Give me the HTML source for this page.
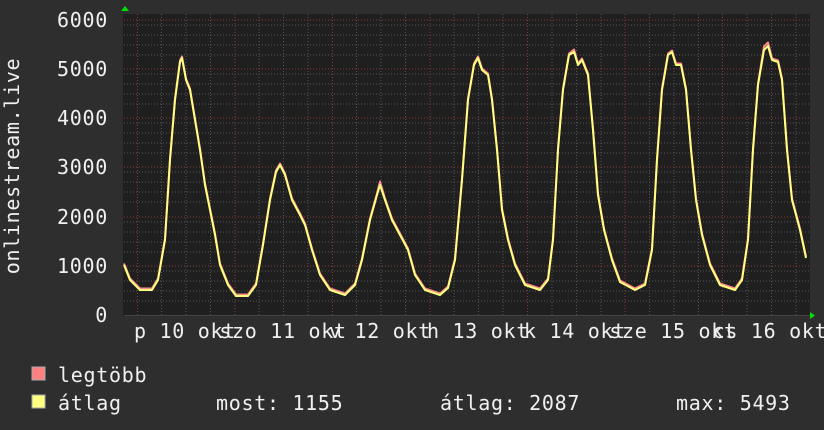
<!DOCTYPE html>
<html><head><meta charset="utf-8"><style>
html,body{margin:0;padding:0;background:#2e2e2e;}
svg{display:block}
text{font-family:"DejaVu Sans Mono","Liberation Mono",monospace;font-size:20px;fill:#f0f0f0;letter-spacing:0.7px}
</style></head><body>
<svg width="824" height="430" viewBox="0 0 824 430" xmlns="http://www.w3.org/2000/svg">
<rect width="824" height="430" fill="#2e2e2e"/>
<rect x="123" y="14" width="687" height="302" fill="#1f1f1f"/>
<g stroke="#555" stroke-width="1" stroke-dasharray="1,2">
<path d="M124 25H810M124 35H810M124 45H810M124 55H810M124 74H810M124 84H810M124 94H810M124 104H810M124 123H810M124 133H810M124 143H810M124 153H810M124 172H810M124 182H810M124 192H810M124 202H810M124 222H810M124 232H810M124 242H810M124 252H810M124 271H810M124 281H810M124 291H810M124 301H810"/>
<path d="M161.5 14V316M186 14V316M210.5 14V316M259 14V316M283.5 14V316M308 14V316M356.5 14V316M381 14V316M405.5 14V316M454 14V316M478.5 14V316M503 14V316M552 14V316M576.5 14V316M601 14V316M649.5 14V316M674 14V316M698.5 14V316M747 14V316M771.5 14V316M796 14V316"/>
</g>
<g stroke="#8a3a3a" stroke-width="1" stroke-dasharray="1,2">
<path d="M124 20H810M124 69H810M124 118H810M124 167H810M124 217H810M124 266H810"/>
<path d="M137.5 14V316M235 14V316M332.5 14V316M430 14V316M527.5 14V316M625 14V316M722.5 14V316"/>
</g>
<path d="M124 315.5H810" stroke="#444" stroke-width="1"/>
<path d="M121 11L125 6L129 11Z" fill="#00e000"/>
<path d="M810 312L815 315.5L810 319Z" fill="#00e000"/>
<g fill="none" stroke-width="2" stroke-linejoin="round">
<polyline id="p" stroke="#ff8a8a" transform="translate(0,-1.5)" points="124,265 130,280 140,290 152,290 158,280 165,240 170,160 175,100 180,62 182,58 186,80 190,90 195,120 200,150 205,185 210,210 215,235 220,265 228,285 236,296 248,296 256,285 263,245 270,200 276,172 280,165 285,175 292,200 300,215 305,225 312,250 320,275 330,290 345,295 355,285 362,260 370,220 377,195 380,183 385,200 392,220 400,235 408,250 415,275 425,290 440,295 448,288 455,260 462,180 468,100 474,65 478,58 482,70 488,75 492,100 497,150 502,210 508,240 515,265 525,285 540,290 548,280 553,240 558,150 563,90 569,55 574,51 578,65 582,60 588,75 593,130 598,195 604,230 612,260 620,282 635,290 645,285 652,250 657,160 662,90 668,55 672,52 676,65 681,65 686,90 691,150 696,200 702,235 710,265 720,285 735,290 742,280 748,240 753,150 758,85 764,48 768,44 772,60 778,62 782,80 787,150 792,200 800,230 806,258"/>
<polyline stroke="#ffff80" points="124,265 130,280 140,290 152,290 158,280 165,240 170,160 175,100 180,62 182,58 186,80 190,90 195,120 200,150 205,185 210,210 215,235 220,265 228,285 236,296 248,296 256,285 263,245 270,200 276,172 280,165 285,175 292,200 300,215 305,225 312,250 320,275 330,290 345,295 355,285 362,260 370,220 377,195 380,185 385,200 392,220 400,235 408,250 415,275 425,290 440,295 448,288 455,260 462,180 468,100 474,65 478,58 482,70 488,75 492,100 497,150 502,210 508,240 515,265 525,285 540,290 548,280 553,240 558,150 563,90 569,55 574,52 578,65 582,60 588,75 593,130 598,195 604,230 612,260 620,282 635,290 645,285 652,250 657,160 662,90 668,55 672,52 676,65 681,65 686,90 691,150 696,200 702,235 710,265 720,285 735,290 742,280 748,240 753,150 758,85 764,50 768,46 772,60 778,62 782,80 787,150 792,200 800,230 806,258"/>
</g>
<g text-anchor="end">
<text x="108" y="27">6000</text>
<text x="108" y="76">5000</text>
<text x="108" y="125">4000</text>
<text x="108" y="174">3000</text>
<text x="108" y="224">2000</text>
<text x="108" y="273">1000</text>
<text x="108" y="322">0</text>
</g>
<text transform="translate(19,166) rotate(-90)" text-anchor="middle">onlinestream.live</text>
<g text-anchor="middle">
<text x="185" y="338">p 10 okt</text>
<text x="283" y="338">szo 11 okt</text>
<text x="380" y="338">v 12 okt</text>
<text x="478" y="338">h 13 okt</text>
<text x="575" y="338">k 14 okt</text>
<text x="673" y="338">sze 15 okt</text>
<text x="770" y="338">cs 16 okt</text>
</g>
<rect x="32" y="367" width="13" height="13" fill="#ff8080" stroke="#aaa" stroke-width="1"/>
<rect x="32" y="395" width="13" height="13" fill="#ffff80" stroke="#aaa" stroke-width="1"/>
<text x="58" y="382">legtöbb</text>
<text x="58" y="410">átlag</text>
<text x="216" y="410">most: 1155</text>
<text x="440" y="410">átlag: 2087</text>
<text x="676" y="410">max: 5493</text>
</svg>
</body></html>
